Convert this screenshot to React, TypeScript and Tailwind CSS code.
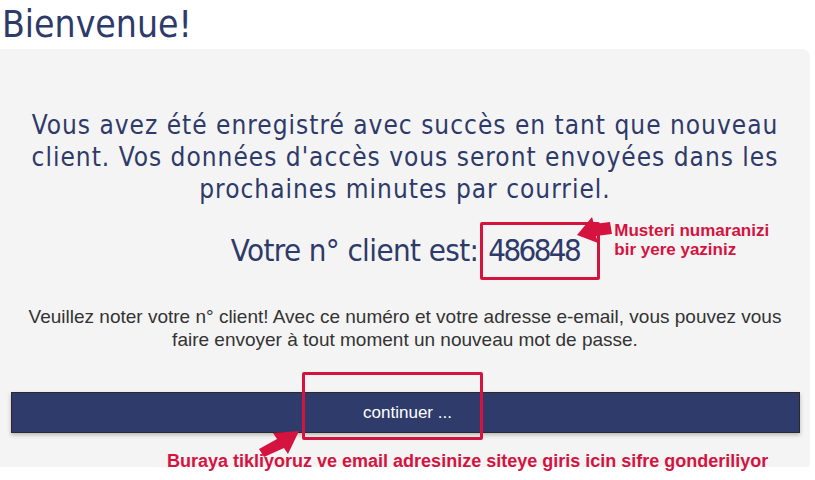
import React from "react";

const RED = "#d5133f";

function Arrow({ pts }: { pts: string }) {
  return <polygon points={pts} fill={RED} />;
}

export default function App() {
  return (
    <div className="w-[815px] h-[480px] bg-white overflow-hidden flex flex-col font-['DejaVu_Sans_Condensed','DejaVu_Sans',sans-serif] text-[#2e3a6a]">
      <h1 className="h-[49px] pl-[2px] text-[37px] leading-[49px] [font-stretch:condensed]">Bienvenue!</h1>

      <section className="w-[810px] h-[418px] shrink-0 bg-[#f4f4f4] rounded-tr-[8px] rounded-br-[4px] pt-[60px] flex flex-col">
        <p className="px-[24px] text-center text-[26px] leading-[32px] tracking-[1px]">
          Vous avez été enregistré avec succès en tant que nouveau client. Vos données d'accès vous seront envoyées dans les prochaines minutes par courriel.
        </p>

        <div className="mt-[29px] flex justify-center items-center h-[32px] text-[31px] leading-[32px]">
          <span className="tracking-[-0.6px]">Votre n° client est:</span>
          <span className="relative ml-[10px]">
            <span className="inline-block tracking-[-2.6px]">486848</span>
            {/* annotation box around the number */}
            <span className="absolute -left-[8px] -top-[12px] w-[120px] h-[58px] border-[3px] border-[#d5133f] rounded-[2px]" />
            <svg className="absolute left-[80px] -top-[20px] overflow-visible" width="50" height="40">
              <Arrow pts="42,8 26,10 24,3 9,21 30,29 28,22 44,20" />
            </svg>
            <span className="absolute left-[126px] -top-[13px] whitespace-nowrap text-[17px] leading-[19px] font-bold tracking-normal font-['Liberation_Sans',Arial,sans-serif] text-[#d5133f]">
              Musteri numaranizi
              <br />
              bir yere yaziniz
            </span>
          </span>
        </div>

        <p className="mt-[39px] px-[24px] text-center text-[19px] leading-[23px] text-[#333333] font-['Liberation_Sans',Arial,sans-serif]">
          Veuillez noter votre n° client! Avec ce numéro et votre adresse e-email, vous pouvez vous faire envoyer à tout moment un nouveau mot de passe.
        </p>

        <div className="mt-[41px] ml-[11px] mr-[10px]">
          <button className="w-full h-[41px] flex items-center justify-center bg-[#2f3c6b] border border-[#2a2a2a] text-white text-[17px] shadow-[0_2px_4px_rgba(0,0,0,0.25)] font-['Liberation_Sans',Arial,sans-serif]">
            <span className="relative pl-[4px]">
              continuer ...
              <span className="absolute -left-[57px] -top-[28px] w-[181px] h-[68px] border-[3px] border-[#d5133f] rounded-[2px]" />
              <svg className="absolute -left-[99px] top-[27px] overflow-visible" width="40" height="30">
                <Arrow pts="4,30 -1,22 17,12 13,6 39,4 28,27 24,21" />
              </svg>
            </span>
          </button>
        </div>

        <p className="mt-[16px] pl-[167px] whitespace-nowrap text-[18px] leading-[24px] font-bold text-[#d5133f] font-['Liberation_Sans',Arial,sans-serif]">
          Buraya tikliyoruz ve email adresinize siteye giris icin sifre gonderiliyor
        </p>
      </section>
    </div>
  );
}
